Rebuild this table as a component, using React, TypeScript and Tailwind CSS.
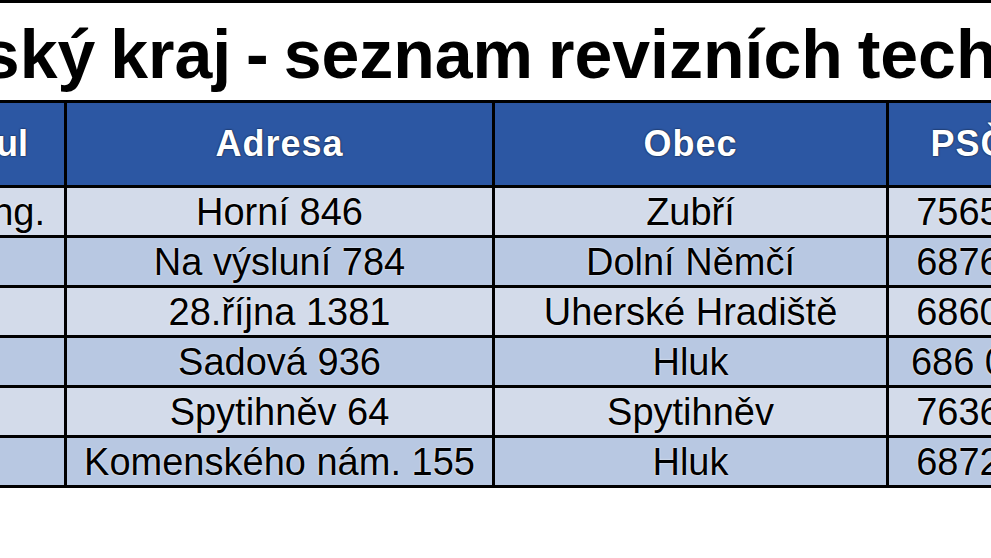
import React from "react";

const rows = [
  { t: "Ing.", a: "Horní 846", o: "Zubří", p: "75654" },
  { t: "", a: "Na výsluní 784", o: "Dolní Němčí", p: "68764" },
  { t: "", a: "28.října 1381", o: "Uherské Hradiště", p: "68601" },
  { t: "", a: "Sadová 936", o: "Hluk", p: "686 05" },
  { t: "", a: "Spytihněv 64", o: "Spytihněv", p: "76364" },
  { t: "", a: "Komenského nám. 155", o: "Hluk", p: "68725" },
];

export default function App() {
  const font = { fontFamily: '"Liberation Sans", Arial, sans-serif' };
  return (
    <div className="w-[991px] h-[558px] overflow-hidden bg-white" style={font}>
      <div className="h-[3px] bg-black" />
      <div className="mt-[17px] ml-[-139px] whitespace-nowrap text-[68px] font-bold leading-none text-black [word-spacing:-4px]">
        Zlínský kraj - seznam revizních techniků
      </div>
      <div className="mt-[12px] ml-[-100px] w-max grid grid-cols-[161px_425px_391px_160px] gap-[3px] bg-black p-[3px]">
        <div className="h-[82px] bg-[#2c57a3] flex items-center justify-end pr-[36px] text-[36px] font-bold text-white [text-shadow:0_0_2px_rgba(0,0,0,0.9)]">
          Titul
        </div>
        <div className="h-[82px] bg-[#2c57a3] flex items-center justify-center text-[36px] font-bold text-white tracking-[1px] [text-shadow:0_0_2px_rgba(0,0,0,0.9)]">
          Adresa
        </div>
        <div className="h-[82px] bg-[#2c57a3] flex items-center justify-center text-[36px] font-bold text-white tracking-[1px] [text-shadow:0_0_2px_rgba(0,0,0,0.9)]">
          Obec
        </div>
        <div className="h-[82px] bg-[#2c57a3] flex items-center justify-center text-[36px] font-bold text-white tracking-[1px] [text-shadow:0_0_2px_rgba(0,0,0,0.9)]">
          PSČ
        </div>
        {rows.map((r, i) => {
          const bg = i % 2 === 0 ? "bg-[#d3dbea]" : "bg-[#b8c8e2]";
          const cell = `h-[47px] ${bg} flex items-center text-[38px] leading-none text-black [text-shadow:0_0_2px_#ffffff]`;
          return (
            <React.Fragment key={i}>
              <div className={`${cell} justify-end pr-[19px]`}>{r.t}</div>
              <div className={`${cell} justify-center whitespace-nowrap`}>{r.a}</div>
              <div className={`${cell} justify-center whitespace-nowrap`}>{r.o}</div>
              <div className={`${cell} justify-center whitespace-nowrap`}>{r.p}</div>
            </React.Fragment>
          );
        })}
      </div>
    </div>
  );
}
